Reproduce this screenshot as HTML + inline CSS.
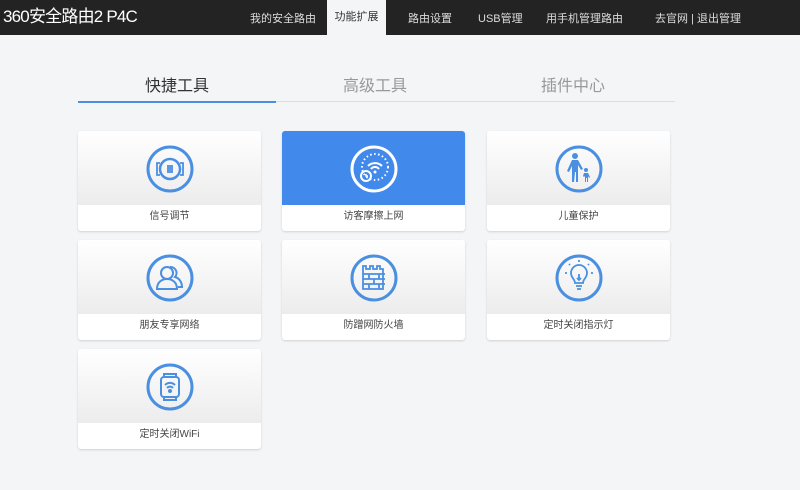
<!DOCTYPE html>
<html><head><meta charset="utf-8"><style>
*{margin:0;padding:0;box-sizing:border-box}
body{width:800px;height:490px;background:#f4f5f6;font-family:"Liberation Sans","Noto Sans CJK SC",sans-serif;position:relative;overflow:hidden}
.hd{position:absolute;left:0;top:0;width:800px;height:35px;background:#232323}
.logo{position:absolute;left:3px;top:7px;color:#fff;font-size:17px;letter-spacing:-0.8px;line-height:20px}
.nav{position:absolute;top:10px;color:#ddd;font-size:11px}
.act{position:absolute;left:327px;top:0;width:59px;height:36px;background:#f4f5f6;color:#333;font-size:11px;text-align:center;line-height:34px}
.tab{position:absolute;top:72px;font-size:16px;color:#999;width:198px;text-align:center}
.card{position:absolute;width:183px;height:100px;background:#fff;border-radius:3px;box-shadow:0 1px 2px rgba(0,0,0,.15);overflow:hidden}
.top{height:74px;background:linear-gradient(#fff,#ececec)}
.lbl{height:26px;line-height:24px;text-align:center;font-size:10px;color:#444}
svg{display:block;margin:0 auto;position:relative;top:13px}
</style></head><body>
<div class="hd">
<div class="logo">360安全路由2 P4C</div>
<div class="nav" style="left:250px">我的安全路由</div>
<div class="nav" style="left:408px">路由设置</div>
<div class="nav" style="left:478px">USB管理</div>
<div class="nav" style="left:546px">用手机管理路由</div>
<div class="nav" style="left:655px">去官网 | 退出管理</div>
</div>
<div class="act">功能扩展</div>
<div class="tab" style="left:78px;color:#333">快捷工具</div>
<div class="tab" style="left:276px">高级工具</div>
<div class="tab" style="left:474px">插件中心</div>
<div style="position:absolute;left:78px;top:101px;width:597px;height:1px;background:#ddd"></div>
<div style="position:absolute;left:78px;top:101px;width:198px;height:2px;background:#4a8fe0"></div>

<div class="card" style="left:78px;top:131px"><div class="top"><svg width="50" height="50" viewBox="0 0 50 50" fill="none" stroke="#4a8fe0" stroke-width="3"><circle cx="25" cy="25" r="22"/><circle cx="25" cy="25" r="10" stroke-width="2.5"/><path d="M15 19h-3v12h3M35 19h3v12h-3M23 21v8M25 21v8M27 21v8" stroke-width="1.8"/></svg></div><div class="lbl">信号调节</div></div>

<div class="card" style="left:282px;top:131px"><div class="top" style="background:#4189ea"><svg width="50" height="50" viewBox="0 0 50 50" fill="none" stroke="#fff" stroke-width="3"><circle cx="25" cy="25" r="22"/><circle cx="26" cy="23" r="13" stroke-width="2" stroke-dasharray="1.5 2.5"/><path d="M19 22a10 10 0 0 1 14 0M22 25a5 5 0 0 1 8 0" stroke-width="2"/><circle cx="26" cy="28" r="1.5" fill="#fff" stroke="none"/><circle cx="17" cy="32" r="5" stroke-width="2"/><path d="M17 30v2h2" stroke-width="1.5"/></svg></div><div class="lbl">访客摩擦上网</div></div>

<div class="card" style="left:487px;top:131px"><div class="top"><svg width="50" height="50" viewBox="0 0 50 50" fill="none" stroke="#4a8fe0" stroke-width="3"><circle cx="25" cy="25" r="22"/><g fill="#4a8fe0" stroke="none"><circle cx="21" cy="12" r="3"/><path d="M18 16h6l5 9-2 1-3-5v17h-2v-10h-1l-1 10h-2v-16l-3 6-2-1z"/><circle cx="32" cy="26" r="2"/><path d="M30 29h4l2 4-1 1-1-2v6h-1v-4h-1v4h-1v-6l-1 1-1-1z"/></g></svg></div><div class="lbl">儿童保护</div></div>

<div class="card" style="left:78px;top:240px"><div class="top"><svg width="50" height="50" viewBox="0 0 50 50" fill="none" stroke="#4a8fe0" stroke-width="3"><circle cx="25" cy="25" r="22"/><g stroke-width="2"><circle cx="22" cy="20" r="6"/><path d="M12 36c0-7 5-10 10-10s10 3 10 10z"/><path d="M25 14a6 6 0 0 1 5 10c4 1 7 5 7 10h-4"/></g></svg></div><div class="lbl">朋友专享网络</div></div>

<div class="card" style="left:282px;top:240px"><div class="top"><svg width="50" height="50" viewBox="0 0 50 50" fill="none" stroke="#4a8fe0" stroke-width="3"><circle cx="25" cy="25" r="22"/><g stroke-width="1.8"><path d="M14 13h3v3h4v-3h3v3h4v-3h3v3h3v20h-20z"/><path d="M14 21h22M14 26h22M14 31h22M20 21v5M30 21v5M25 26v5M20 31v5M30 31v5"/></g></svg></div><div class="lbl">防蹭网防火墙</div></div>

<div class="card" style="left:487px;top:240px"><div class="top"><svg width="50" height="50" viewBox="0 0 50 50" fill="none" stroke="#4a8fe0" stroke-width="3"><circle cx="25" cy="25" r="22"/><g stroke-width="1.8"><path d="M21 30c0-4-4-5-4-10a8 8 0 0 1 16 0c0 5-4 6-4 10z"/><path d="M22 33h6M23 36h4M25 21v6M23 25l2 2 2-2"/><path d="M25 7v2M15 11l1 1M35 11l-1 1M11 20h2M37 20h2"/></g></svg></div><div class="lbl">定时关闭指示灯</div></div>

<div class="card" style="left:78px;top:349px"><div class="top"><svg width="50" height="50" viewBox="0 0 50 50" fill="none" stroke="#4a8fe0" stroke-width="3"><circle cx="25" cy="25" r="22"/><g stroke-width="2"><rect x="16" y="15" width="18" height="20" rx="3"/><path d="M19 15v-3h12v3M19 35v3h12v-3"/><path d="M20 23a7 7 0 0 1 10 0M22 26a4 4 0 0 1 6 0"/><circle cx="25" cy="29" r="1" fill="#4a8fe0"/></g></svg></div><div class="lbl">定时关闭WiFi</div></div>
</body></html>
